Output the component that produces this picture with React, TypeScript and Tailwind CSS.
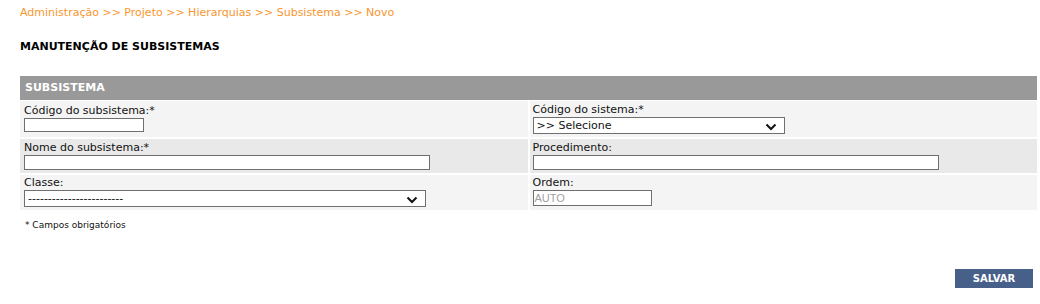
const font = { fontFamily: '"DejaVu Sans", Verdana, sans-serif' };

const Chevron = () => (
  <svg width="12" height="8" viewBox="0 0 12 8" className="absolute right-[7px] top-[5px]">
    <path d="M1.5 1.5 L6 6 L10.5 1.5" fill="none" stroke="#111" strokeWidth="2" />
  </svg>
);

const Label = ({ children }: { children: React.ReactNode }) => (
  <div className="text-[11px] leading-[14px] text-[#111]">{children}</div>
);

const App = () => {
  return (
    <div className="w-[1040px] h-[304px] bg-white" style={font}>
      <div className="px-5 pt-[6px]">
        <div className="text-[11px] leading-[14px] text-[#f7962e]">
          Administração &gt;&gt; Projeto &gt;&gt; Hierarquias &gt;&gt; Subsistema &gt;&gt; Novo
        </div>
        <h1 className="mt-[20px] text-[11px] leading-[14px] font-bold text-black">MANUTENÇÃO DE SUBSISTEMAS</h1>
      </div>

      <div className="ml-[20px] w-[1017px] mt-[22px]">
        <div className="bg-[#999999] h-[24px] flex items-center px-[5px] text-[11px] font-bold text-white">SUBSISTEMA</div>

        <div className="grid grid-cols-2 gap-x-[2px] gap-y-[2px] mt-[1px]">
          {/* linha 1 */}
          <div className="bg-[#f4f4f4] h-[36px] px-[4px] pt-[3px]">
            <Label>Código do subsistema:*</Label>
            <input className="block w-[120px] h-[14px] border border-[#6f6f6f] bg-white" />
          </div>
          <div className="bg-[#f4f4f4] h-[36px] px-[3px] pt-[2px]">
            <Label>Código do sistema:*</Label>
            <div className="relative w-[252px] h-[17px] border border-[#6f6f6f] bg-white text-[11px] leading-[15px] pl-[3px] text-[#111]">
              &gt;&gt; Selecione
              <Chevron />
            </div>
          </div>

          {/* linha 2 */}
          <div className="bg-[#e9e9e9] h-[34px] px-[4px] pt-[2px]">
            <Label>Nome do subsistema:*</Label>
            <input className="block w-[406px] h-[15px] border border-[#6f6f6f] bg-white" />
          </div>
          <div className="bg-[#e9e9e9] h-[34px] px-[3px] pt-[2px]">
            <Label>Procedimento:</Label>
            <input className="block w-[406px] h-[15px] border border-[#6f6f6f] bg-white" />
          </div>

          {/* linha 3 */}
          <div className="bg-[#f4f4f4] h-[35px] px-[4px] pt-[1px]">
            <Label>Classe:</Label>
            <div className="relative w-[402px] h-[17px] border border-[#6f6f6f] bg-white text-[11px] leading-[15px] pl-[3px] text-[#111]">
              ------------------------
              <Chevron />
            </div>
          </div>
          <div className="bg-[#f4f4f4] h-[35px] px-[3px] pt-[1px]">
            <Label>Ordem:</Label>
            <div className="w-[119px] h-[16px] border border-[#6f6f6f] bg-white text-[11px] leading-[14px] pl-[1px] text-[#a0a0a0]" style={{ fontFamily: '"Liberation Sans", Arial, sans-serif' }}>
              AUTO
            </div>
          </div>
        </div>

        <div className="mt-[9px] pl-[5px] text-[9px] leading-[12px] text-[#111]">* Campos obrigatórios</div>
      </div>

      <div className="flex justify-end pr-[7px] mt-[38px]">
        <button className="w-[78px] h-[19px] bg-[#476089] text-white text-[10px] font-bold">SALVAR</button>
      </div>
    </div>
  );
};

export default App;
